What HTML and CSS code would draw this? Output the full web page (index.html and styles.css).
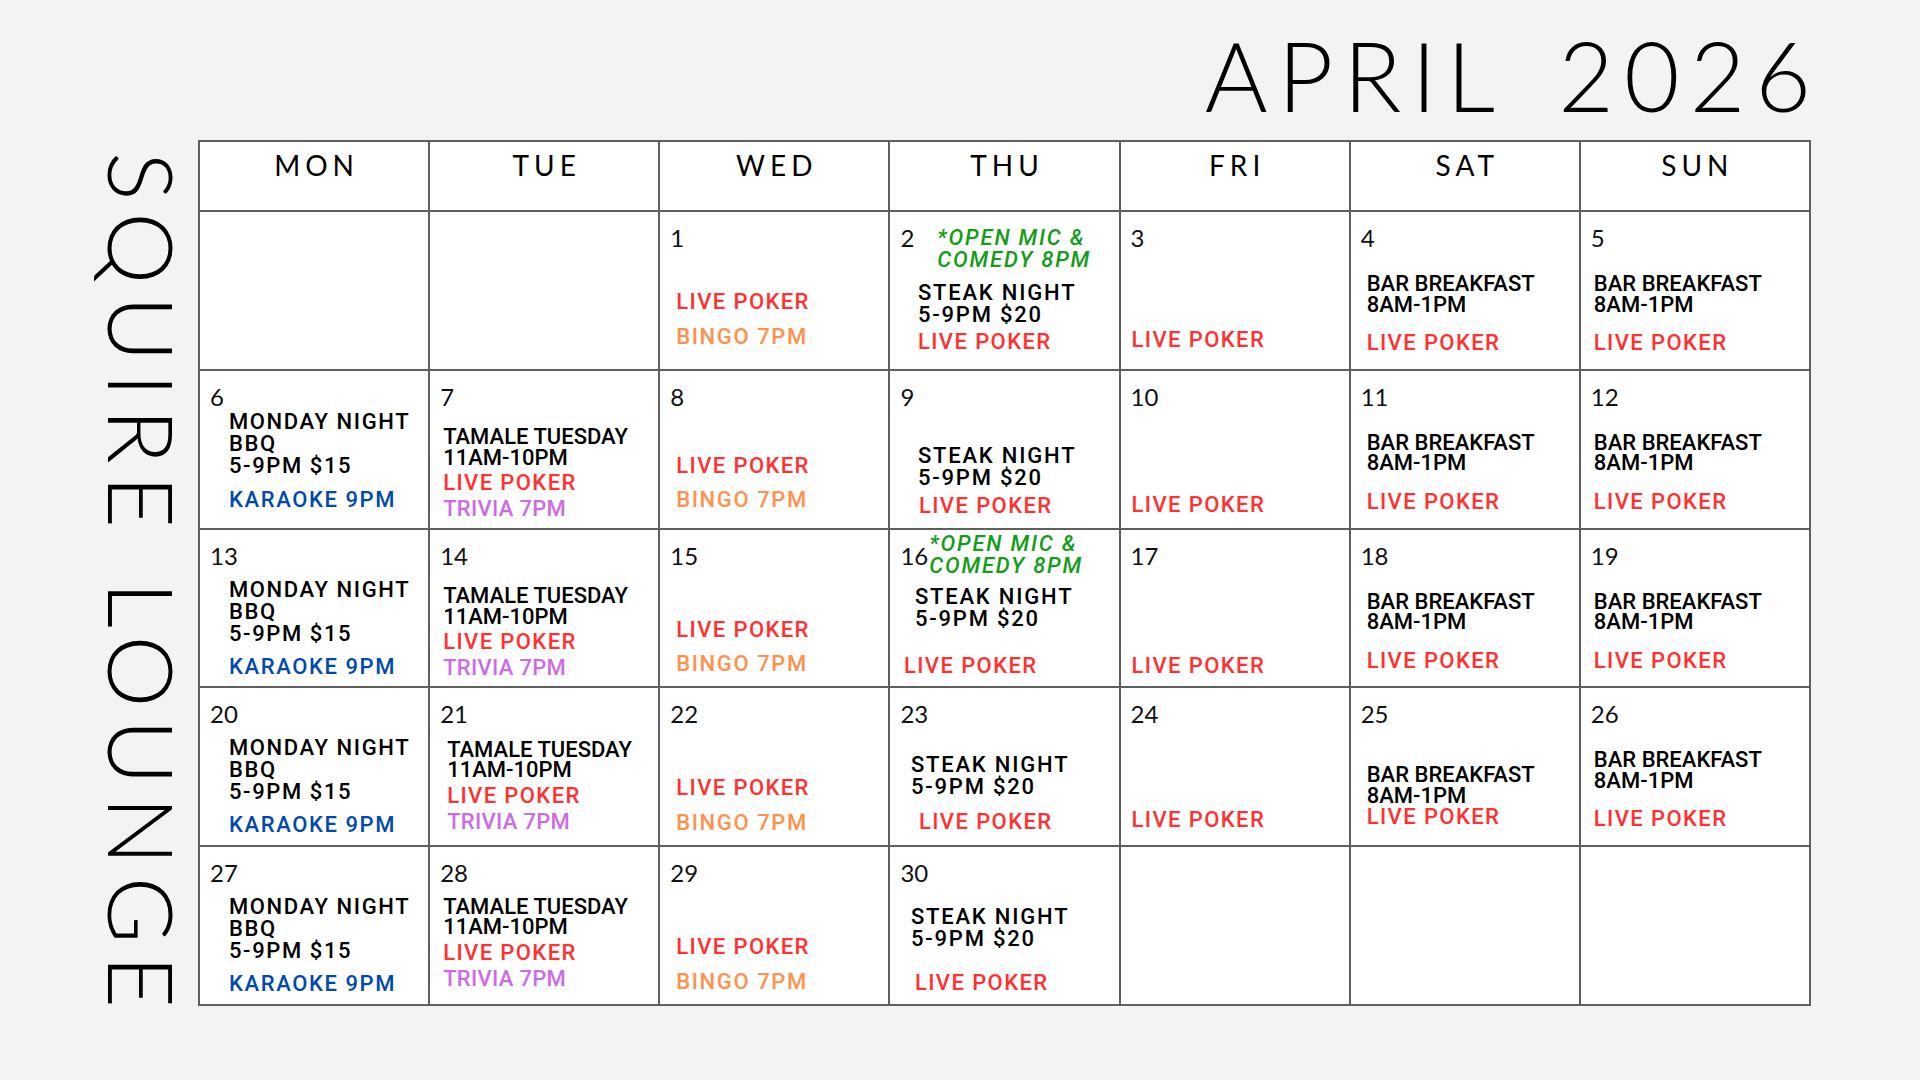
FILE: index.html
```html
<!DOCTYPE html>
<html lang="en">
<head>
<meta charset="utf-8">
<title>April 2026 — Squire Lounge</title>
<link rel="stylesheet" href="styles.css">
</head>
<body>
<div class="page">
  <aside class="side"><div class="brand">SQUIRE LOUNGE</div></aside>
  <main class="main">
    <h1 class="title">APRIL 2026</h1>
    <div class="cal">
      <div class="dow">MON</div>
      <div class="dow">TUE</div>
      <div class="dow">WED</div>
      <div class="dow">THU</div>
      <div class="dow">FRI</div>
      <div class="dow">SAT</div>
      <div class="dow">SUN</div>

      <div class="cell"></div>
      <div class="cell"></div>
      <div class="cell wed w1"><div class="num">1</div><p class="ev poker">LIVE POKER</p><p class="ev bingo">BINGO 7PM</p></div>
      <div class="cell thu w1"><div class="head"><div class="num">2</div><p class="ev green">*OPEN MIC &amp;<br>COMEDY 8PM</p></div><p class="ev steak">STEAK NIGHT<br>5-9PM $20</p><p class="ev poker">LIVE POKER</p></div>
      <div class="cell fri w1"><div class="num">3</div><p class="ev poker">LIVE POKER</p></div>
      <div class="cell sat w1"><div class="num">4</div><p class="ev bfast">BAR BREAKFAST<br>8AM-1PM</p><p class="ev poker">LIVE POKER</p></div>
      <div class="cell sun w1"><div class="num">5</div><p class="ev bfast">BAR BREAKFAST<br>8AM-1PM</p><p class="ev poker">LIVE POKER</p></div>

      <div class="cell mon w2"><div class="num">6</div><p class="ev bbq">MONDAY NIGHT<br>BBQ<br>5-9PM $15</p><p class="ev karaoke">KARAOKE 9PM</p></div>
      <div class="cell tue w2"><div class="num">7</div><p class="ev food">TAMALE TUESDAY<br>11AM-10PM</p><p class="ev poker">LIVE POKER</p><p class="ev trivia">TRIVIA 7PM</p></div>
      <div class="cell wed w2"><div class="num">8</div><p class="ev poker">LIVE POKER</p><p class="ev bingo">BINGO 7PM</p></div>
      <div class="cell thu w2"><div class="head"><div class="num">9</div></div><p class="ev steak">STEAK NIGHT<br>5-9PM $20</p><p class="ev poker">LIVE POKER</p></div>
      <div class="cell fri w2"><div class="num">10</div><p class="ev poker">LIVE POKER</p></div>
      <div class="cell sat w2"><div class="num">11</div><p class="ev bfast">BAR BREAKFAST<br>8AM-1PM</p><p class="ev poker">LIVE POKER</p></div>
      <div class="cell sun w2"><div class="num">12</div><p class="ev bfast">BAR BREAKFAST<br>8AM-1PM</p><p class="ev poker">LIVE POKER</p></div>

      <div class="cell mon w3"><div class="num">13</div><p class="ev bbq">MONDAY NIGHT<br>BBQ<br>5-9PM $15</p><p class="ev karaoke">KARAOKE 9PM</p></div>
      <div class="cell tue w3"><div class="num">14</div><p class="ev food">TAMALE TUESDAY<br>11AM-10PM</p><p class="ev poker">LIVE POKER</p><p class="ev trivia">TRIVIA 7PM</p></div>
      <div class="cell wed w3"><div class="num">15</div><p class="ev poker">LIVE POKER</p><p class="ev bingo">BINGO 7PM</p></div>
      <div class="cell thu w3"><div class="head"><div class="num">16</div><p class="ev green">*OPEN MIC &amp;<br>COMEDY 8PM</p></div><p class="ev steak">STEAK NIGHT<br>5-9PM $20</p><p class="ev poker">LIVE POKER</p></div>
      <div class="cell fri w3"><div class="num">17</div><p class="ev poker">LIVE POKER</p></div>
      <div class="cell sat w3"><div class="num">18</div><p class="ev bfast">BAR BREAKFAST<br>8AM-1PM</p><p class="ev poker">LIVE POKER</p></div>
      <div class="cell sun w3"><div class="num">19</div><p class="ev bfast">BAR BREAKFAST<br>8AM-1PM</p><p class="ev poker">LIVE POKER</p></div>

      <div class="cell mon w4"><div class="num">20</div><p class="ev bbq">MONDAY NIGHT<br>BBQ<br>5-9PM $15</p><p class="ev karaoke">KARAOKE 9PM</p></div>
      <div class="cell tue w4"><div class="num">21</div><p class="ev food">TAMALE TUESDAY<br>11AM-10PM</p><p class="ev poker">LIVE POKER</p><p class="ev trivia">TRIVIA 7PM</p></div>
      <div class="cell wed w4"><div class="num">22</div><p class="ev poker">LIVE POKER</p><p class="ev bingo">BINGO 7PM</p></div>
      <div class="cell thu w4"><div class="head"><div class="num">23</div></div><p class="ev steak">STEAK NIGHT<br>5-9PM $20</p><p class="ev poker">LIVE POKER</p></div>
      <div class="cell fri w4"><div class="num">24</div><p class="ev poker">LIVE POKER</p></div>
      <div class="cell sat w4"><div class="num">25</div><p class="ev bfast">BAR BREAKFAST<br>8AM-1PM</p><p class="ev poker">LIVE POKER</p></div>
      <div class="cell sun w4"><div class="num">26</div><p class="ev bfast">BAR BREAKFAST<br>8AM-1PM</p><p class="ev poker">LIVE POKER</p></div>

      <div class="cell mon w5"><div class="num">27</div><p class="ev bbq">MONDAY NIGHT<br>BBQ<br>5-9PM $15</p><p class="ev karaoke">KARAOKE 9PM</p></div>
      <div class="cell tue w5"><div class="num">28</div><p class="ev food">TAMALE TUESDAY<br>11AM-10PM</p><p class="ev poker">LIVE POKER</p><p class="ev trivia">TRIVIA 7PM</p></div>
      <div class="cell wed w5"><div class="num">29</div><p class="ev poker">LIVE POKER</p><p class="ev bingo">BINGO 7PM</p></div>
      <div class="cell thu w5"><div class="head"><div class="num">30</div></div><p class="ev steak">STEAK NIGHT<br>5-9PM $20</p><p class="ev poker">LIVE POKER</p></div>
      <div class="cell"></div>
      <div class="cell"></div>
      <div class="cell"></div>
    </div>
  </main>
</div>
</body>
</html>
```
FILE: styles.css
```css
* { box-sizing: border-box; margin: 0; padding: 0; }

body {
  background: #f3f3f3;
  width: 1920px;
  height: 1080px;
  overflow: hidden;
  font-family: Roboto, "Liberation Sans", sans-serif;
  color: #000;
}

.page { display: flex; height: 1080px; }

.side { width: 198px; padding: 152px 0 0 98px; }

.brand {
  writing-mode: vertical-rl;
  font: 300 91px/91px Lato, "Liberation Sans", sans-serif;
  letter-spacing: 11.5px;
  word-spacing: 6px;
  white-space: nowrap;
}

.main { width: 1613px; padding-top: 27px; }

.title {
  font: 300 96px/96px Lato, "Liberation Sans", sans-serif;
  letter-spacing: 10px;
  word-spacing: 20px;
  text-align: right;
  margin-right: -10px;
  margin-bottom: 17px;
}

.cal {
  display: grid;
  grid-template-columns: repeat(7, 1fr);
  grid-template-rows: 68px repeat(5, 156.8px);
  gap: 2px;
  padding: 2px;
  background: #5f5f5f;
}

.dow {
  background: #fff;
  text-align: center;
  font: 400 28px/28px Lato, sans-serif;
  letter-spacing: 5px;
  padding: 9px 0 0 5px;
}

.cell {
  background: #fff;
  padding: 14px 0 0 10px;
  display: flex;
  flex-direction: column;
  align-items: flex-start;
}

.num { font: 400 24px/24px Lato, sans-serif; color: #111; }

.head { display: flex; align-items: flex-start; }

.ev {
  font: 500 22px/22px Roboto, "Liberation Sans", sans-serif;
  white-space: nowrap;
}

.poker { color: #ff3131; letter-spacing: 1.4px; }
.bingo { color: #ff914d; letter-spacing: 1.6px; }
.trivia { color: #cb6ce6; letter-spacing: 0.3px; }
.karaoke { color: #004aad; letter-spacing: 1.6px; }
.bbq { letter-spacing: 1.6px; }
.steak { letter-spacing: 1.8px; }
.food { letter-spacing: 0; }
.green { color: #149c1a; font-style: italic; letter-spacing: 1.8px; margin: 1px 0 0 23px; }

/* Monday */
.mon .bbq { margin: 11px 0 0 19px; }
.mon.w2 .bbq { margin-top: 2px; }
.mon .karaoke { margin: 11px 0 0 19px; }
.mon.w2 .karaoke { margin-top: 12px; }

/* Tuesday */
.tue .food { margin: 17px 0 0 3px; line-height: 21px; }
.tue.w4 .food { margin: 14px 0 0 7px; line-height: 20px; }
.tue.w5 .food { margin-top: 12px; line-height: 20px; }
.tue .poker { margin: 4.5px 0 0 3px; }
.tue .trivia { margin: 4px 0 0 3px; }
.tue.w4 .poker, .tue.w4 .trivia { margin-left: 7px; }

/* Wednesday */
.wed .poker { margin: 51px 0 0 6px; }
.wed.w1 .poker { margin-top: 41px; }
.wed.w2 .poker { margin-top: 46px; }
.wed .bingo { margin: 12.5px 0 0 6px; }

/* Thursday */
.thu .steak { margin: 11px 0 0 17.5px; }
.thu .poker { margin: 5px 0 0 17.5px; }
.thu.w2 .steak { margin-top: 36px; }
.thu.w2 .poker { margin: 6px 0 0 18.5px; }
.thu.w3 .green { margin: -11px 0 0 1px; }
.thu.w3 .steak { margin: 9px 0 0 14.5px; }
.thu.w3 .poker { margin: 25px 0 0 3.5px; }
.thu.w4 .steak { margin: 28px 0 0 10.5px; }
.thu.w4 .poker { margin: 13px 0 0 18.5px; }
.thu.w5 .steak { margin: 21px 0 0 10.5px; }
.thu.w5 .poker { margin: 22px 0 0 14.5px; }

/* Friday */
.fri .poker { margin: 79px 0 0 1px; }
.fri.w2 .poker { margin-top: 85px; }
.fri.w3 .poker { margin-top: 87px; }
.fri.w4 .poker { margin-top: 83px; }

/* Saturday & Sunday */
.bfast { line-height: 20.5px; }
.sat .bfast, .sat .poker { margin-left: 6px; }
.sun .bfast, .sun .poker { margin-left: 3px; }
.sat .bfast, .sun .bfast { margin-top: 24px; }
.sat .poker, .sun .poker { margin-top: 17px; }
.sat.w4 .bfast { margin-top: 39px; }
.sat.w4 .poker { margin-top: 0; }
```
